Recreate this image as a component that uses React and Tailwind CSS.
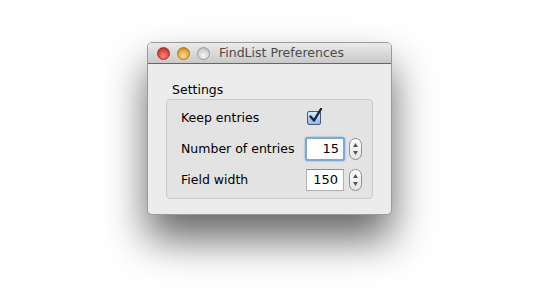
import React from 'react';

const font = { fontFamily: '"DejaVu Sans", "Liberation Sans", sans-serif' };

function TrafficLight({ color }) {
  const styles = {
    red: 'bg-[radial-gradient(circle_at_50%_70%,#ff8c86_0%,#e0443c_55%,#9b1c16_100%)] border-[#a0302a]',
    yellow: 'bg-[radial-gradient(circle_at_50%_70%,#ffe29a_0%,#e9a93a_55%,#a96b12_100%)] border-[#a8782a]',
    gray: 'bg-[radial-gradient(circle_at_50%_70%,#f4f4f4_0%,#d6d6d6_55%,#a8a8a8_100%)] border-[#9c9c9c]',
  };
  return <div className={`w-[13px] h-[13px] rounded-full border ${styles[color]}`} />;
}

function Stepper() {
  return (
    <div className="w-[13px] h-[22px] rounded-full border border-[#8e8e8e] bg-gradient-to-b from-[#ffffff] to-[#e4e4e4] flex flex-col items-center justify-between py-[4px]">
      <svg width="5" height="4" viewBox="0 0 5 4"><path d="M2.5 0 L5 4 L0 4 Z" fill="#555" /></svg>
      <svg width="5" height="4" viewBox="0 0 5 4"><path d="M0 0 L5 0 L2.5 4 Z" fill="#555" /></svg>
    </div>
  );
}

function NumberField({ value, focused }) {
  return (
    <div className="flex items-center gap-[4px]">
      <div
        className={
          focused
            ? 'w-[40px] h-[24px] rounded-[3px] border-[2px] border-[#7fa8d9] shadow-[0_0_2px_#6f9ad0] bg-white flex items-center justify-end pr-[4px] text-[13px] text-black'
            : 'w-[38px] h-[22px] border border-[#b0b0b0] border-t-[#8c8c8c] bg-white flex items-center justify-end pr-[5px] text-[13px] text-black mx-[1px]'
        }
      >
        {value}
      </div>
      <Stepper />
    </div>
  );
}

function Checkbox() {
  return (
    <div className="relative w-[14px] h-[14px] rounded-[2px] border border-[#4a5a70] bg-gradient-to-b from-[#d6e8fb] to-[#8fb9ea]">
      <svg className="absolute left-[1px] top-[-4px]" width="14" height="15" viewBox="0 0 14 15">
        <path d="M1.5 8.5 L5 12.5 L12 1" fill="none" stroke="#14243f" strokeWidth="2.4" strokeLinecap="round" strokeLinejoin="round" />
      </svg>
    </div>
  );
}

export default function App() {
  return (
    <div className="w-[540px] h-[300px] bg-white overflow-hidden pt-[42px] pl-[147px]" style={font}>
      <div className="w-[245px] h-[173px] rounded-[5px] border border-[#9a9a9a] bg-[#ececec] shadow-[0_24px_42px_rgba(0,0,0,0.6)] flex flex-col overflow-hidden">
        <div className="h-[21px] bg-gradient-to-b from-[#ebebeb] to-[#c9c9c9] border-b border-[#666] flex items-center pl-[9px] shrink-0">
          <div className="flex items-center gap-[7px]">
            <TrafficLight color="red" />
            <TrafficLight color="yellow" />
            <TrafficLight color="gray" />
          </div>
          <span className="ml-[9px] text-[12.5px] text-[#4a4a4a] leading-none">FindList Preferences</span>
        </div>
        <div className="flex-1 pt-[18px] px-[18px]">
          <div className="pl-[6px] text-[12.5px] text-black leading-[15px] mb-[2px]">Settings</div>
          <div className="w-[207px] rounded-[4px] border border-[#c9c9c9] bg-[#e3e3e3] pt-[7px] pb-[7px] pl-[14px] pr-[10px] flex flex-col gap-[9px] text-[12.5px] text-black">
            <div className="flex items-center justify-between h-[22px]">
              <span>Keep entries</span>
              <div className="w-[57px] flex items-center pl-[2px]">
                <Checkbox />
              </div>
            </div>
            <div className="flex items-center justify-between h-[22px]">
              <span>Number of entries</span>
              <NumberField value="15" focused />
            </div>
            <div className="flex items-center justify-between h-[22px]">
              <span>Field width</span>
              <NumberField value="150" />
            </div>
          </div>
        </div>
      </div>
    </div>
  );
}
